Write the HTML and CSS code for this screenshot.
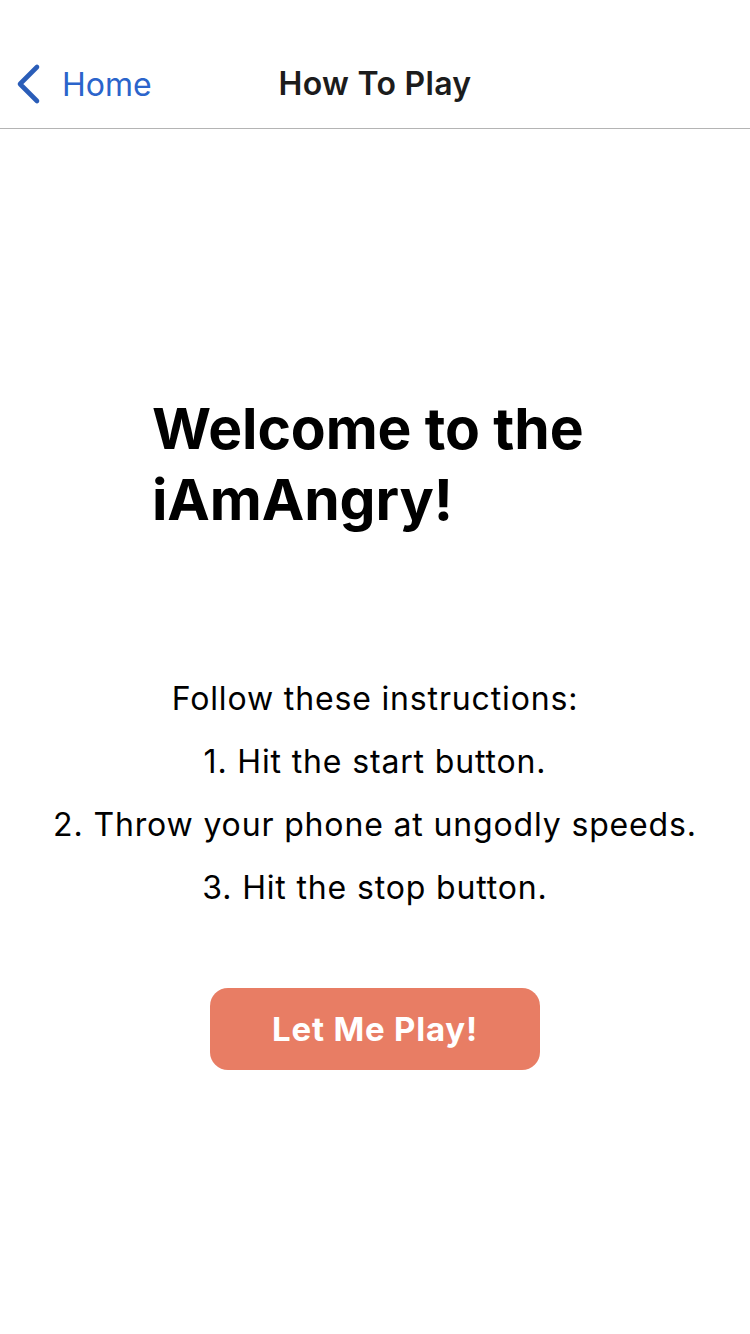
FILE: index.html
```html
<!DOCTYPE html>
<html lang="en">
<head>
<meta charset="utf-8">
<title>How To Play</title>
<link rel="stylesheet" href="styles.css">
</head>
<body>
  <header class="nav">
    <a class="back" href="#">
      <svg class="chev" width="30" height="44" viewBox="0 0 30 44"><polyline points="21,5 4,22 21,39" fill="none" stroke="#2a5db8" stroke-width="4.6" stroke-linecap="round" stroke-linejoin="round"/></svg>
      <span class="back-label">Home</span>
    </a>
    <h1 class="nav-title">How To Play</h1>
  </header>
  <main class="content">
    <h2 class="welcome">Welcome to the iAmAngry!</h2>
    <div class="steps">
      <p>Follow these instructions:</p>
      <p>1. Hit the start button.</p>
      <p>2. Throw your phone at ungodly speeds.</p>
      <p>3. Hit the stop button.</p>
    </div>
    <button class="play">Let Me Play!</button>
  </main>
</body>
</html>
```
FILE: styles.css
```css
html, body {
  margin: 0;
  padding: 0;
  background: #ffffff;
}
body {
  width: 750px;
  height: 1334px;
  font-family: Inter, "Noto Sans", sans-serif;
  color: #000;
}
.nav {
  height: 128px;
  border-bottom: 1px solid #b4b4b4;
  display: flex;
  align-items: center;
  justify-content: center;
  position: relative;
}
.back {
  position: absolute;
  left: 16px;
  top: 62px;
  display: flex;
  align-items: center;
  text-decoration: none;
  color: #2a62c9;
}
.chev {
  display: block;
}
.back-label {
  margin-left: 16px;
  font-size: 32px;
  font-weight: 400;
  color: #2b64cb;
}
.nav-title {
  margin: 38px 0 0 0;
  font-size: 32px;
  font-weight: 600;
  letter-spacing: 0.3px;
  color: #1c1c1c;
}
.content {
  display: flex;
  flex-direction: column;
  align-items: center;
}
.welcome {
  align-self: flex-start;
  margin: 264px 0 0 152px;
  width: 470px;
  font-size: 57px;
  line-height: 71px;
  font-weight: 700;
  letter-spacing: -0.1px;
}
.steps {
  margin-top: 132px;
  text-align: center;
  font-size: 32px;
  line-height: 63px;
  font-weight: 400;
  letter-spacing: 0.85px;
}
.steps p {
  margin: 0;
}
.play {
  margin-top: 69px;
  width: 330px;
  height: 82px;
  border: none;
  border-radius: 18px;
  background: #e87d64;
  color: #fff;
  font-family: Inter, "Noto Sans", sans-serif;
  font-size: 33px;
  font-weight: 700;
  letter-spacing: 0.8px;
}
```
